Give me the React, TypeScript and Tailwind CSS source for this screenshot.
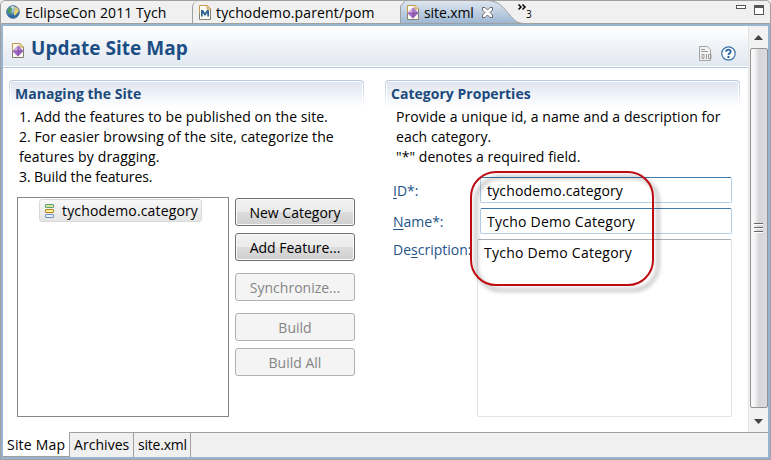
import React from 'react';

function SiteIcon({ className = '' }: { className?: string }) {
  return (
    <svg width="12" height="15" viewBox="0 0 12 15" className={'shrink-0 ' + className}>
      <path d="M.5 .5H8L11.5 4V14.5H.5Z" fill="#fbfaf0" />
      <path d="M.5 8V.5H8L11.5 4" fill="none" stroke="#c19a4a" />
      <path d="M.5 8V14.5H11.5V4" fill="none" stroke="#85806f" />
      <path d="M8 .5V4H11.5" fill="#e8d49b" stroke="#c19a4a" strokeWidth=".8" />
      <path d="M6 2.5L11.5 8L6 13.5L.5 8Z" fill="#9a63bd" />
      <path d="M6 2.5L6 8H.5Z" fill="#d3aee6" />
      <path d="M6 2.5L6 8H11.5Z" fill="#b183cf" />
      <path d="M.5 8H6V13.5Z" fill="#a673c8" />
      <path d="M6 3.500V12.500M1.500 8H10.500" stroke="#7c479f" strokeWidth=".8" />
    </svg>
  );
}

function MavenIcon() {
  return (
    <svg width="12" height="15" viewBox="0 0 12 15" className="shrink-0">
      <path d="M.5 .5H8L11.5 4V14.5H.5Z" fill="#fdfcf4" />
      <path d="M.5 14V.5H8L11.5 4" fill="none" stroke="#c19a4a" />
      <path d="M.5 8V14.5H11.5V4" fill="none" stroke="#85806f" />
      <path d="M8 .5V4H11.5Z" fill="#e8d49b" stroke="#c19a4a" strokeWidth=".8" />
      <path d="M2 5H4L6 8L8 5H10V11.500H8.300V8L6 11L3.700 8V11.500H2Z" fill="#2f6494" />
    </svg>
  );
}

function GlobeIcon() {
  return (
    <svg width="14" height="14" viewBox="0 0 14 14" className="shrink-0">
      <defs>
        <radialGradient id="globe" cx="40%" cy="30%">
          <stop offset="0" stopColor="#c9e5f4" />
          <stop offset="1" stopColor="#2a68a3" />
        </radialGradient>
      </defs>
      <circle cx="7" cy="7" r="6.3" fill="url(#globe)" stroke="#4d7396" />
      <path d="M1.5 4L5 2L6.5 4L5 6.5L6 9L4 9L2 7Z" fill="#4f9b59" />
      <path d="M8 2L11 2.5L13 6L10.5 9L8.5 11L7.5 7L9 5Z" fill="#e5cf73" />
      <path d="M5 1.5L8 1.5L7 4Z" fill="#f5faf4" />
    </svg>
  );
}

function CategoryIcon() {
  return (
    <svg width="9" height="14" viewBox="0 0 9 14" className="shrink-0">
      <rect x=".5" y=".5" width="8" height="3" rx=".5" fill="#dce98f" stroke="#58a083" />
      <rect x=".5" y="5.5" width="8" height="3" rx=".5" fill="#fff1a4" stroke="#b78516" />
      <rect x=".5" y="10.5" width="8" height="3" rx=".5" fill="#e5f0fc" stroke="#7590bd" />
    </svg>
  );
}

function EditorTabs() {
  return (
    <div className="relative flex h-6 shrink-0 overflow-hidden rounded-t-[5px] border-x border-b border-t border-[#a0a0a0] bg-[#f0f0f0] text-[14px] leading-[23px]">
      <div className="flex w-[191px] items-center pl-[5px]">
        <GlobeIcon />
        <span className="ml-[5px] whitespace-nowrap tracking-[0.08px]">EclipseCon 2011 Tych</span>
      </div>
      <div className="flex w-[208px] items-center rounded-tl-[6px] border-l border-[#a0a0a0] pl-[6px]">
        <MavenIcon />
        <span className="ml-[5px] whitespace-nowrap tracking-[0.14px]">tychodemo.parent/pom</span>
      </div>
      <div className="relative flex h-[23px] w-[134px] items-center pl-[7px]">
        <svg className="absolute -left-px -top-px" width="134" height="25" viewBox="0 0 134 25">
          <defs>
            <linearGradient id="tab" x1="0" y1="0" x2="0" y2="1">
              <stop offset="0" stopColor="#dfe7f0" />
              <stop offset="1" stopColor="#99b4d1" />
            </linearGradient>
          </defs>
          <path d="M1.5 25V6L6.500 .5H88C101 .5 105 9 110 14C116 21 118 23.500 126 23.500V25Z" fill="url(#tab)" />
          <path d="M1.500 24V6L6.500 .5H88C101 .5 105 9 110 14C116 21 118 23.500 126 23.500H134" fill="none" stroke="#a0a0a0" />
        </svg>
        <SiteIcon className="relative" />
        <span className="relative ml-[5px] tracking-[-0.1px]">site.xml</span>
        <svg className="relative ml-[8px]" width="11" height="11" viewBox="0 0 11 11">
          <path d="M.5 .5H3L5.500 3L8 .5H10.500V3L8 5.500L10.500 8V10.500H8L5.500 8L3 10.500H.5V8L3 5.500L.5 3Z" fill="#fff" stroke="#686868" />
        </svg>
      </div>
      <svg className="-ml-[16px] mt-[3px]" width="9" height="7" viewBox="0 0 9 7">
        <path d="M.5 .5L3 3L.5 5.500M4.500 .5L7 3L4.500 5.500" fill="none" stroke="#000" strokeWidth="1.5" />
      </svg>
      <span className="-ml-px mt-[7px] text-[10px] leading-[12px]">3</span>
      <div className="ml-auto flex gap-[8px] pr-[6px] pt-[4px]">
        <div className="h-[4px] w-[10px] border border-[#555] bg-white" />
        <div className="h-[10px] w-[10px] border border-t-[3px] border-[#555] bg-white" />
      </div>
    </div>
  );
}

function SectionTitle({ children }: { children: React.ReactNode }) {
  return (
    <div className="h-[27px] rounded-t-[4px] bg-linear-to-b from-[#b5c9de] to-white px-px pt-px">
      <div className="h-[26px] rounded-t-[3px] bg-white px-px pt-px">
        <h2 className="h-[25px] bg-linear-to-b from-[#dfe5f0] to-white pl-[4px] text-[14px] font-bold leading-[23px] tracking-[0.03px] text-[#1c4a7c]">
          {children}
        </h2>
      </div>
    </div>
  );
}

function Button({ children, disabled = false, className = '' }: { children: React.ReactNode; disabled?: boolean; className?: string }) {
  return (
    <button
      disabled={disabled}
      className={
        'h-[28px] w-[120px] shrink-0 rounded-[3px] border text-[14px] leading-[25px] ' +
        (disabled
          ? 'border-[#adb2b5] bg-[#f4f4f4] text-[#858585] '
          : 'border-[#707070] bg-[linear-gradient(to_bottom,#f2f2f2_0%,#ebebeb_48%,#dddddd_50%,#cfcfcf_100%)] shadow-[inset_0_0_0_1px_#fafafa] ') +
        className
      }
    >
      {children}
    </button>
  );
}

function ManagingSection() {
  return (
    <section className="w-[355px]">
      <SectionTitle>Managing the Site</SectionTitle>
      <p className="whitespace-nowrap pl-[10px] text-[14px] leading-[20px] tracking-[0.07px]">
        1. Add the features to be published on the site.
        <br />
        2. For easier browsing of the site, categorize the
        <br />
        <span className="tracking-[0.14px]">features by dragging.</span>
        <br />
        <span className="tracking-[-0.08px]">3. Build the features.</span>
      </p>
      <div className="ml-[8px] mt-[10px] flex gap-[6px]">
        <div className="h-[220px] w-[212px] border border-[#828790] bg-white pl-[21px] pt-px">
          <div className="flex h-[23px] w-[163px] items-center rounded-[3px] border border-[#d9d9d9] bg-linear-to-b from-[#f8f8f8] to-[#e5e5e5] pl-[5px]">
            <CategoryIcon />
            <span className="ml-[8px] text-[14px] leading-[20px] tracking-[0.15px]">tychodemo.category</span>
          </div>
        </div>
        <div className="flex flex-col pt-px">
          <Button>New Category</Button>
          <Button className="mt-[7px]">Add Feature...</Button>
          <Button disabled className="mt-[12px]">Synchronize...</Button>
          <Button disabled className="mt-[12px]">Build</Button>
          <Button disabled className="mt-[7px]">Build All</Button>
        </div>
      </div>
    </section>
  );
}

function CategorySection() {
  return (
    <section className="w-[355px]">
      <SectionTitle>Category Properties</SectionTitle>
      <p className="whitespace-nowrap pl-[11px] text-[14px] leading-[20px] tracking-[0.07px]">
        Provide a unique id, a name and a description for
        <br />
        each category.
        <br />
        "*" denotes a required field.
      </p>
      <div className="relative ml-[8px] mt-[10px] w-[339px] text-[14px]">
        <div className="flex h-[26px] items-center text-[#24548a]">
          <label className="w-[87px]"><u className="underline-offset-2">I</u>D*:</label>
          <div className="h-[26px] w-[252px] rounded-[2px] border border-[#b5cfe7] border-t-[#3d7bad] pl-[6px] leading-[25px] tracking-[0.15px] text-black">tychodemo.category</div>
        </div>
        <div className="mt-[5px] flex h-[26px] items-center text-[#24548a]">
          <label className="w-[87px]"><u className="underline-offset-2">N</u>ame*:</label>
          <div className="h-[26px] w-[252px] rounded-[2px] border border-[#b5cfe7] border-t-[#3d7bad] pl-[6px] leading-[26px] tracking-[0.25px] text-black">Tycho Demo Category</div>
        </div>
        <div className="mt-[5px] flex text-[#24548a]">
          <label className="mr-[6px] w-[78px] overflow-hidden leading-[21px]">De<u className="underline-offset-2">s</u>cription:</label>
          <div className="h-[178px] w-[255px] rounded-[2px] border border-[#e2e3ea] border-t-[#abadb3] pl-[6px] pt-[3px] leading-[20px] tracking-[0.25px] text-black">Tycho Demo Category</div>
        </div>
        <div className="absolute left-[77px] top-[-6px] h-[115px] w-[184px] rounded-[26px] border-2 border-[#bd0b12] [filter:drop-shadow(5px_5px_2px_rgba(0,0,0,0.4))]" />
      </div>
    </section>
  );
}

function ScrollBar() {
  return (
    <div className="flex w-[20px] shrink-0 flex-col items-center border-l border-[#e3e3e3] bg-[#f2f2f2]">
      <div className="flex h-[22px] items-center">
        <svg width="9" height="5" viewBox="0 0 9 5"><path d="M0 5L4.500 0L9 5Z" fill="#444" /></svg>
      </div>
      <div className="flex h-[360px] w-[18px] flex-col items-center justify-center gap-[2px] rounded-[2px] border border-[#929292] bg-linear-to-r from-[#f7f7f7] from-20% via-[#d5d6da] via-50% to-[#dcdce0]">
        <i className="h-[2px] w-[9px] border-b border-white bg-[#666]" />
        <i className="h-[2px] w-[9px] border-b border-white bg-[#666]" />
        <i className="h-[2px] w-[9px] border-b border-white bg-[#666]" />
      </div>
      <div className="flex flex-1 items-center pt-[2px]">
        <svg width="9" height="5" viewBox="0 0 9 5"><path d="M0 0L4.500 5L9 0Z" fill="#444" /></svg>
      </div>
    </div>
  );
}

export default function App() {
  return (
    <div className="flex h-[460px] w-[771px] flex-col overflow-hidden bg-[#f0f0f0] font-['Open_Sans','Noto_Sans',sans-serif] text-black">
      <EditorTabs />
      <div className="flex min-h-0 flex-1 flex-col border-x border-b border-[#a0a0a0]">
        <div className="flex min-h-0 flex-1 flex-col border-2 border-[#99b4d1]">
          <div className="flex min-h-0 flex-1 bg-white">
            <main className="min-w-0 flex-1">
              <header className="flex h-[40px] items-center bg-linear-to-b from-white to-[#e1e8f0] pl-[9px]">
                <SiteIcon className="mt-[9px]" />
                <h1 className="ml-[7px] mt-[4px] text-[19px] font-bold leading-[26px] tracking-[0.03px] text-[#1c4e85]">Update Site Map</h1>
                <div className="ml-auto flex gap-[9px] pr-[12px] pt-[14px]">
                  <svg width="13" height="15" viewBox="0 0 13 15">
                    <path d="M.5 .5H8.500L11.500 3.500V14.500H.5Z" fill="#f2f2f2" stroke="#a3a3a3" />
                    <path d="M2 3.500H6M2 5.500H9M3 8.500H5V12.500H3ZM7.500 8V13M9.500 8.500H12V12.500H9.500Z" fill="none" stroke="#999" />
                  </svg>
                  <svg width="15" height="15" viewBox="0 0 15 15">
                    <circle cx="7.500" cy="7.500" r="6.700" fill="#fff" stroke="#3b70a9" strokeWidth="1.200" />
                    <path d="M5.200 5.800C5.200 3 9.700 3 9.700 5.600C9.700 7.300 7.500 7.200 7.500 9" fill="none" stroke="#2863a3" strokeWidth="1.900" />
                    <rect x="6.500" y="10" width="2" height="2" fill="#2863a3" />
                  </svg>
                </div>
              </header>
              <div className="mt-px h-px bg-[#b5c9de]" />
              <div className="flex gap-[21px] pl-[6px] pt-[12px]">
                <ManagingSection />
                <CategorySection />
              </div>
            </main>
            <ScrollBar />
          </div>
          <footer className="flex h-[25px] shrink-0 bg-[#f0f0f0] text-[14px] leading-[24px]">
            <div className="w-[66px] whitespace-nowrap border-b border-[#a0a0a0] bg-white pl-[4px] leading-[26px] tracking-[0.2px]">Site Map</div>
            <div className="w-[64px] border-l border-t border-[#a0a0a0] pl-[4px] tracking-[0.05px]">Archives</div>
            <div className="w-[58px] border-x border-t border-[#a0a0a0] pl-[4px] tracking-[-0.2px]">site.xml</div>
            <div className="flex-1 border-t border-[#a0a0a0]" />
          </footer>
        </div>
      </div>
    </div>
  );
}
